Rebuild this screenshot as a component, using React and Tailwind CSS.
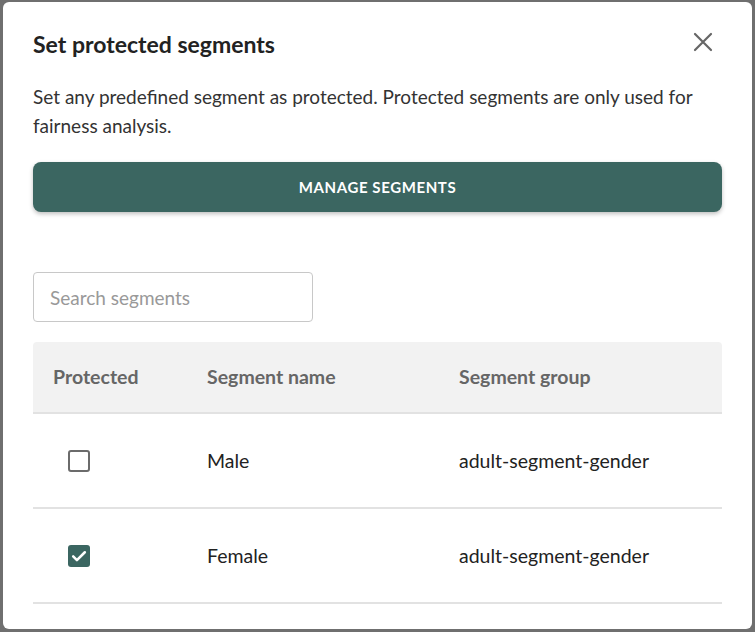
import { useState } from "react";

const SEGMENTS = [
  { id: "male", name: "Male", group: "adult-segment-gender", protected: false },
  { id: "female", name: "Female", group: "adult-segment-gender", protected: true },
];

function CheckBox({ checked, onChange }) {
  return (
    <button
      type="button"
      onClick={onChange}
      className={`flex size-[22px] items-center justify-center rounded-[3px] ${
        checked ? "bg-[#3b6661]" : "border-2 border-[#6b6b6b] bg-white"
      }`}
    >
      {checked ? (
        <svg viewBox="0 0 24 24" className="size-[20px]" fill="none">
          <path
            d="M5 12.5l4.5 4.5L19 7.5"
            stroke="white"
            strokeWidth="3"
            strokeLinecap="round"
            strokeLinejoin="round"
          />
        </svg>
      ) : null}
    </button>
  );
}

export default function App() {
  const [segments, setSegments] = useState(SEGMENTS);
  const [query, setQuery] = useState("");

  const toggle = (id) =>
    setSegments((list) =>
      list.map((s) => (s.id === id ? { ...s, protected: !s.protected } : s)),
    );

  const visible = segments.filter((s) =>
    s.name.toLowerCase().includes(query.toLowerCase()),
  );

  return (
    <div
      className="flex h-[632px] w-[755px] bg-[#6f6f6f] pb-[3px] pl-[3px] pr-[3px] pt-[2px]"
      style={{ fontFamily: "Lato, 'Noto Sans', sans-serif" }}
    >
      <div className="flex flex-1 flex-col rounded-[6px] bg-white pl-[30px] pr-[30px]">
        <div className="flex items-start justify-between pt-[26px]">
          <h2 className="text-[23px] font-bold leading-[32px] text-[#222]">
            Set protected segments
          </h2>
          <button type="button" className="mr-[7px] mt-[2px] text-[#666]">
            <svg viewBox="0 0 24 24" className="size-[24px]" fill="none">
              <path
                d="M4 4l16 16M20 4L4 20"
                stroke="currentColor"
                strokeWidth="2.2"
                strokeLinecap="round"
              />
            </svg>
          </button>
        </div>

        <p className="mt-[22px] pr-[10px] text-[19px] leading-[29px] text-[#333]">
          Set any predefined segment as protected. Protected segments are only
          used for fairness analysis.
        </p>

        <button
          type="button"
          className="mt-[22px] h-[50px] w-full rounded-[8px] bg-[#3b6661] text-[15px] font-bold tracking-[0.04em] text-white shadow-[0_2px_4px_rgba(0,0,0,0.25)]"
        >
          MANAGE SEGMENTS
        </button>

        <input
          value={query}
          onChange={(e) => setQuery(e.target.value)}
          placeholder="Search segments"
          className="mt-[60px] h-[50px] w-[280px] rounded-[4px] border border-[#c8c8c8] px-[16px] text-[19px] text-[#222] outline-none placeholder:text-[#999]"
        />

        <div className="mt-[20px] w-full">
          <div className="grid h-[72px] grid-cols-[174px_252px_1fr] items-center rounded-t-[4px] border-b-2 border-[#e2e2e2] bg-[#f2f2f2] text-[19.5px] font-bold text-[#666]">
            <div className="pl-[20px]">Protected</div>
            <div>Segment name</div>
            <div>Segment group</div>
          </div>
          {visible.map((s) => (
            <div
              key={s.id}
              className="grid h-[95px] grid-cols-[174px_252px_1fr] items-center border-b-2 border-[#e2e2e2] text-[19.5px] text-[#222]"
            >
              <div className="pl-[35px]">
                <CheckBox checked={s.protected} onChange={() => toggle(s.id)} />
              </div>
              <div>{s.name}</div>
              <div>{s.group}</div>
            </div>
          ))}
        </div>
      </div>
    </div>
  );
}
